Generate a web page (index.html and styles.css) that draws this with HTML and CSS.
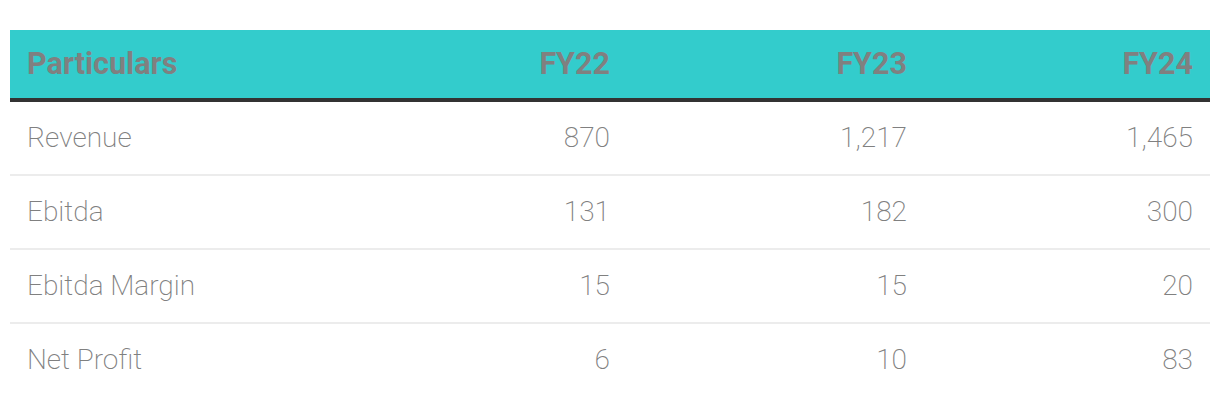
FILE: index.html
```html
<!DOCTYPE html>
<html>
<head>
<meta charset="utf-8">
<link rel="stylesheet" href="styles.css">
</head>
<body>
<div class="wrap">
<table class="fin">
  <colgroup>
    <col class="c1"><col class="c2"><col class="c3"><col class="c4">
  </colgroup>
  <thead>
    <tr><th>Particulars</th><th class="num">FY22</th><th class="num">FY23</th><th class="num">FY24</th></tr>
  </thead>
  <tbody>
    <tr><td>Revenue</td><td class="num">870</td><td class="num">1,217</td><td class="num">1,465</td></tr>
    <tr><td>Ebitda</td><td class="num">131</td><td class="num">182</td><td class="num">300</td></tr>
    <tr><td>Ebitda Margin</td><td class="num">15</td><td class="num">15</td><td class="num">20</td></tr>
    <tr><td>Net Profit</td><td class="num">6</td><td class="num">10</td><td class="num">83</td></tr>
  </tbody>
</table>
</div>
</body>
</html>
```
FILE: styles.css
```css
html, body { margin: 0; padding: 0; background: #fff; }
.wrap { padding: 30px 10px 0 10px; }
.fin {
  width: 1200px;
  border-collapse: collapse;
  table-layout: fixed;
  font-family: Roboto, "Liberation Sans", sans-serif;
  color: #808080;
}
.c1 { width: 320px; }
.c2 { width: 297px; }
.c3 { width: 297px; }
.c4 { width: 286px; }
.fin th {
  background: #33cccc;
  font-weight: 700;
  font-size: 30.5px;
  line-height: 36px;
  text-align: left;
  height: 68px;
  padding: 0 17px;
  border-bottom: 4px solid #333333;
  box-sizing: content-box;
}
.fin td {
  font-weight: 200;
  font-size: 28px;
  line-height: 32px;
  height: 72px;
  padding: 0 17px;
  border-bottom: 2px solid #ececec;
  box-sizing: content-box;
}
.fin tbody tr:last-child td { border-bottom: none; }
.fin .num { text-align: right; }
```
